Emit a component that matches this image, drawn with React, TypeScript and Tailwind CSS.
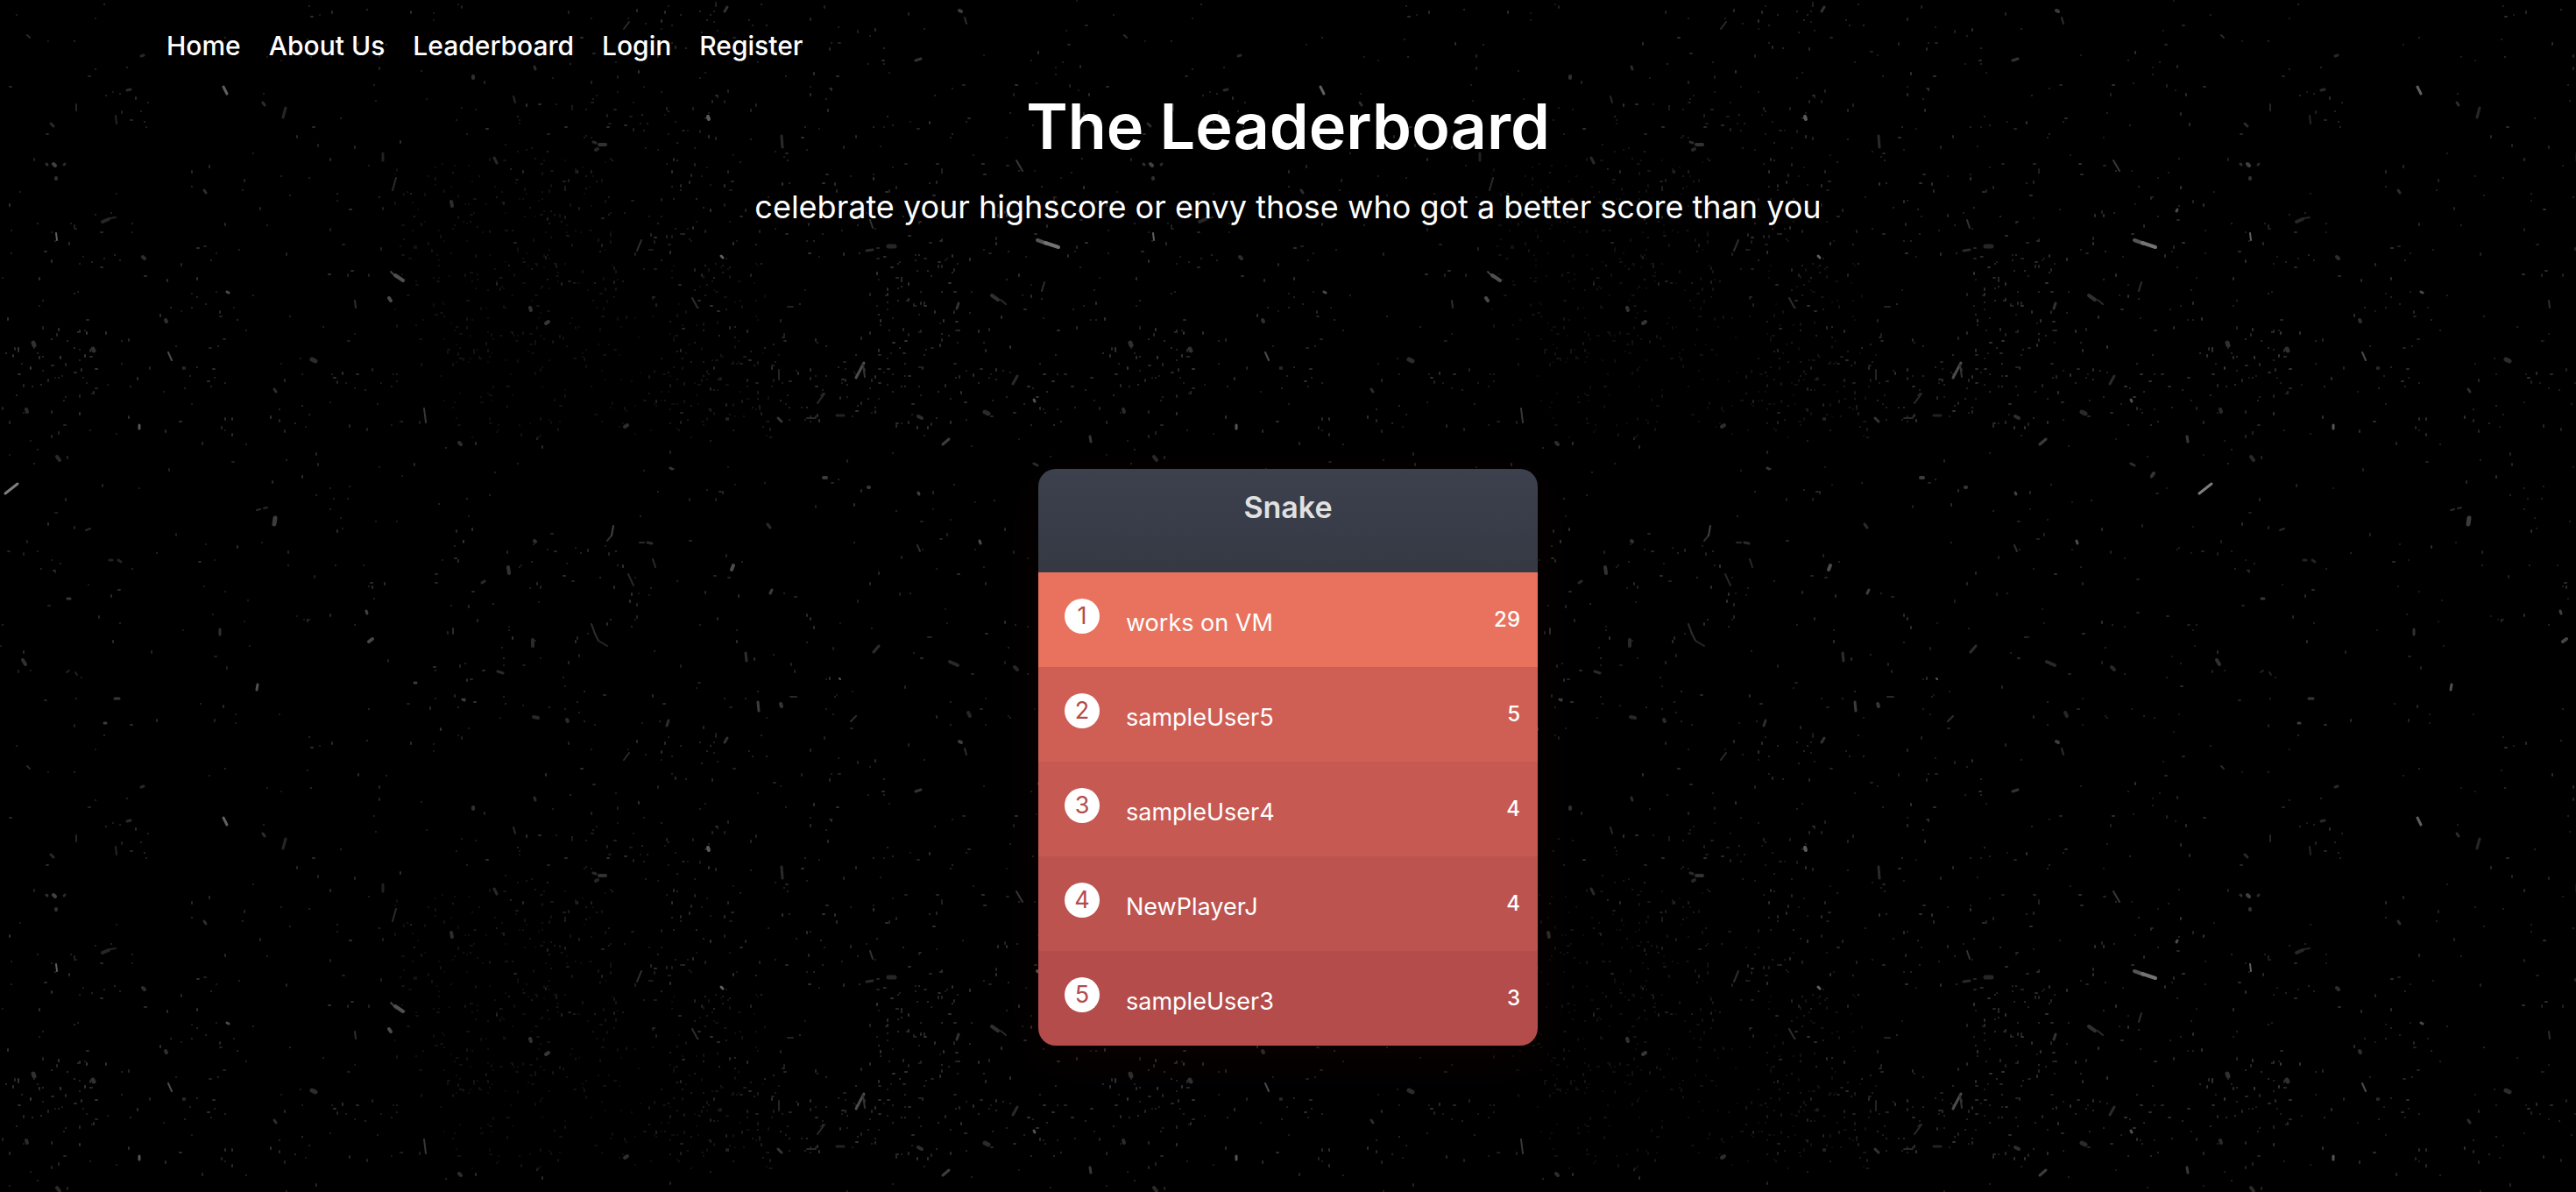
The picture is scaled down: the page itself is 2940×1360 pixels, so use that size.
const links = ["Home", "About Us", "Leaderboard", "Login", "Register"];

const players = [
  { name: "works on VM", score: 29, row: "bg-[#e8725d]" },
  { name: "sampleUser5", score: 5, row: "bg-[#cf5f55]" },
  { name: "sampleUser4", score: 4, row: "bg-[#c65952]" },
  { name: "NewPlayerJ", score: 4, row: "bg-[#bc534f]" },
  { name: "sampleUser3", score: 3, row: "bg-[#b34c4b]" },
];

const TILE_W = 1252;
const TILE_H = 834;

// Scratches and larger dust grains: x1, y1, x2, y2, width, grey level.
const scratches: number[][] = [
  [1184, 274, 1195, 278, 4, 85],
  [1193, 277, 1208, 282, 4, 115],
  [6, 563, 20, 552, 3, 125],
  [446, 310, 451, 315, 2, 65],
  [451, 314, 460, 320, 4, 80],
  [444, 340, 446, 343, 4, 75],
  [255, 99, 259, 107, 3, 95],
  [64, 266, 65, 274, 2, 95],
  [192, 402, 196, 411, 2, 75],
  [259, 333, 261, 334, 3, 75],
  [314, 591, 313, 598, 5, 60],
  [421, 732, 425, 729, 4, 70],
  [294, 781, 293, 787, 3, 80],
  [580, 647, 581, 654, 4, 50],
  [159, 485, 159, 489, 3, 85],
  [808, 133, 809, 136, 4, 90],
  [823, 292, 825, 294, 3, 95],
  [977, 431, 986, 414, 3, 75],
  [985, 416, 987, 430, 2, 50],
  [693, 617, 698, 611, 2, 45],
  [698, 611, 700, 600, 2, 65],
  [675, 712, 679, 723, 2, 45],
  [679, 723, 683, 731, 2, 45],
  [683, 731, 693, 737, 2, 38],
  [835, 650, 837, 645, 4, 75],
  [1076, 507, 1083, 501, 3, 60],
  [727, 286, 732, 274, 2, 45],
  [790, 340, 796, 351, 2, 45],
  [1132, 337, 1139, 342, 4, 48],
  [1142, 342, 1148, 347, 2, 42],
  [1160, 183, 1167, 195, 2, 55],
  [1189, 332, 1192, 322, 2, 45],
  [1092, 352, 1094, 346, 3, 50],
  [1232, 241, 1233, 239, 3, 75],
  [1095, 12, 1097, 13, 4, 60],
  [1101, 20, 1103, 27, 2, 45],
  [1045, 69, 1051, 67, 3, 50],
  [827, 13, 830, 8, 3, 50],
  [712, 33, 718, 25, 2, 42],
  [892, 155, 893, 168, 3, 42],
  [677, 162, 680, 163, 3, 42],
  [684, 165, 691, 165, 4, 50],
  [680, 171, 682, 170, 4, 38],
  [993, 251, 996, 260, 2, 50],
  [989, 286, 996, 285, 3, 40],
  [1014, 281, 1021, 281, 5, 38],
  [899, 350, 905, 350, 2, 35],
  [484, 466, 486, 482, 2, 55],
  [452, 203, 448, 217, 2, 42],
  [437, 175, 437, 183, 3, 34],
  [87, 119, 87, 126, 2, 38],
  [132, 132, 133, 141, 2, 38],
  [326, 123, 323, 134, 3, 38],
  [300, 117, 302, 120, 3, 45],
  [145, 103, 149, 102, 3, 42],
  [117, 253, 124, 250, 4, 38],
  [126, 249, 132, 248, 2, 36],
  [53, 187, 54, 188, 3, 48],
  [73, 188, 74, 187, 3, 42],
  [61, 187, 63, 189, 4, 65],
  [64, 203, 64, 204, 4, 48],
  [58, 141, 61, 144, 3, 42],
  [31, 40, 34, 43, 2, 42],
  [161, 64, 164, 63, 3, 40],
  [163, 293, 165, 295, 4, 45],
  [38, 391, 39, 394, 5, 48],
  [106, 398, 107, 400, 5, 48],
  [356, 410, 360, 412, 5, 44],
  [233, 217, 235, 220, 3, 45],
  [405, 343, 406, 351, 2, 45],
  [189, 365, 190, 367, 4, 46],
  [515, 230, 516, 235, 4, 44],
  [605, 351, 606, 354, 4, 50],
  [623, 369, 626, 367, 4, 55],
  [586, 110, 588, 117, 2, 40],
  [564, 180, 567, 186, 3, 40],
  [540, 87, 540, 89, 4, 48],
  [610, 76, 611, 79, 3, 42],
  [65, 521, 68, 525, 4, 42],
  [30, 467, 31, 470, 4, 42],
  [313, 444, 315, 447, 3, 45],
  [524, 505, 526, 507, 4, 45],
  [293, 582, 297, 581, 2, 42],
  [301, 580, 305, 579, 2, 42],
  [98, 605, 103, 603, 2, 42],
  [125, 639, 128, 639, 3, 35],
  [135, 639, 138, 641, 3, 35],
  [77, 683, 80, 683, 3, 55],
  [26, 753, 29, 758, 4, 48],
  [76, 767, 79, 765, 2, 35],
  [86, 767, 88, 770, 2, 35],
  [251, 718, 251, 724, 3, 48],
  [131, 797, 136, 797, 3, 55],
  [119, 825, 121, 825, 3, 60],
  [473, 779, 475, 779, 3, 60],
  [528, 798, 530, 799, 3, 65],
  [418, 697, 419, 700, 3, 65],
  [608, 730, 608, 737, 4, 42],
  [517, 717, 517, 723, 2, 45],
  [550, 665, 553, 663, 3, 42],
  [568, 766, 574, 768, 3, 42],
  [609, 818, 614, 819, 4, 40],
  [610, 617, 611, 618, 4, 48],
  [730, 619, 735, 619, 2, 42],
  [739, 619, 744, 620, 3, 42],
  [745, 638, 748, 647, 2, 40],
  [717, 655, 723, 668, 2, 38],
  [879, 677, 881, 673, 3, 60],
  [940, 545, 943, 545, 4, 60],
  [991, 556, 992, 556, 4, 55],
  [1048, 562, 1049, 564, 3, 65],
  [1118, 617, 1119, 620, 3, 75],
  [1047, 622, 1050, 629, 2, 45],
  [1204, 543, 1206, 540, 4, 52],
  [1244, 498, 1245, 504, 3, 55],
  [1180, 529, 1184, 531, 3, 45],
  [888, 477, 892, 481, 3, 52],
  [921, 477, 931, 477, 2, 40],
  [955, 474, 963, 474, 3, 34],
  [933, 460, 941, 449, 2, 42],
  [889, 422, 889, 433, 2, 36],
  [1180, 456, 1181, 458, 3, 80],
  [1048, 475, 1052, 477, 4, 46],
  [1124, 470, 1128, 472, 5, 42],
  [1156, 438, 1161, 429, 3, 42],
  [1084, 755, 1093, 759, 4, 40],
  [997, 744, 1003, 737, 3, 45],
  [851, 745, 852, 754, 3, 45],
  [865, 801, 866, 811, 3, 60],
  [891, 803, 892, 806, 4, 52],
  [761, 828, 763, 822, 3, 45],
  [971, 823, 977, 817, 2, 46],
  [958, 774, 959, 775, 2, 90],
  [1105, 813, 1107, 817, 4, 38],
  [902, 795, 909, 795, 2, 40],
  [647, 821, 648, 823, 4, 42],
  [1158, 761, 1161, 764, 4, 40],
  [713, 487, 716, 485, 4, 46],
  [765, 534, 767, 535, 3, 55],
  [876, 598, 879, 602, 3, 42],
];

// Areas strewn with small specks: x, y, width, height, count, grey level.
const fields: number[][] = [
  [0, 0, 626, 210, 75, 40],
  [0, 210, 480, 207, 95, 40],
  [450, 180, 250, 237, 200, 19],
  [500, 300, 380, 200, 220, 18],
  [560, 100, 280, 230, 110, 32],
  [626, 0, 313, 200, 90, 40],
  [939, 0, 313, 200, 75, 40],
  [740, 200, 512, 217, 210, 42],
  [1000, 270, 90, 140, 50, 46],
  [0, 370, 110, 90, 45, 46],
  [0, 417, 480, 80, 75, 40],
  [880, 417, 372, 70, 120, 42],
  [740, 400, 150, 90, 60, 30],
  [0, 500, 626, 334, 130, 38],
  [490, 600, 240, 234, 75, 42],
  [720, 490, 532, 344, 150, 38],
];

function seeded(seed: number) {
  let s = seed;
  return () => {
    s = (s * 16807) % 2147483647;
    return (s - 1) / 2147483646;
  };
}

const random = seeded(48271);

const specks = fields.flatMap(([x, y, w, h, count, grey]) =>
  Array.from({ length: count }, () => {
    const shape = random();
    return {
      x: Math.round((x + random() * w) / 2) * 2,
      y: Math.round((y + random() * h) / 2) * 2,
      w: shape > 0.85 ? 4 : 2,
      h: shape < 0.28 ? 4 : 2,
      grey: Math.round(grey * (0.8 + random() * 0.4)),
    };
  }),
);

const tone = (grey: number) => `rgb(${grey} ${grey} ${grey})`;

function DustBackground() {
  return (
    <svg className="pointer-events-none absolute inset-0 size-full" aria-hidden="true">
      <defs>
        <pattern id="dust" width={TILE_W} height={TILE_H} patternUnits="userSpaceOnUse">
          {specks.map((s, i) => (
            <rect key={i} x={s.x} y={s.y} width={s.w} height={s.h} rx="1" fill={tone(s.grey)} />
          ))}
          {scratches.map(([x1, y1, x2, y2, width, grey], i) => (
            <line
              key={i}
              x1={x1}
              y1={y1}
              x2={x2}
              y2={y2}
              stroke={tone(grey)}
              strokeWidth={width}
              strokeLinecap="round"
            />
          ))}
        </pattern>
      </defs>
      <rect width="100%" height="100%" fill="url(#dust)" />
    </svg>
  );
}

export default function App() {
  return (
    <div className="relative isolate min-h-screen overflow-hidden bg-black font-[Inter,sans-serif] text-white">
      <DustBackground />
      <div className="relative">
        <nav className="px-[190px] pt-8" aria-label="Main">
          <ul className="flex flex-wrap gap-8 text-[30px] leading-10 font-medium">
            {links.map((label) => (
              <li key={label}>
                <a href="#">{label}</a>
              </li>
            ))}
          </ul>
        </nav>

        <header className="mt-6 text-center">
          <h1 className="text-[72px] leading-24 font-semibold">The Leaderboard</h1>
          <p className="mt-5 text-[36px] leading-12">
            celebrate your highscore or envy those who got a better score than you
          </p>
        </header>

        <main className="mt-[275px] pb-20">
          <section className="mx-auto w-full max-w-[570px] overflow-hidden rounded-[20px] shadow-[0_14px_60px_rgba(62,9,11,0.2)]">
            <h2 className="bg-linear-to-b from-[#3d414e] to-[#353944] pt-5 pb-[50px] text-center text-[34px] leading-12 font-semibold text-[#e1e1e1]">
              Snake
            </h2>
            <ol>
              {players.map((player, i) => (
                <li
                  key={player.name}
                  className={`flex items-start gap-[30px] py-[30px] pr-5 pl-[30px] ${player.row}`}
                >
                  <span className="flex size-10 shrink-0 items-center justify-center rounded-full bg-white text-[27px] text-[#b34c4b]">
                    {i + 1}
                  </span>
                  <span className="flex-1 pt-2 text-[27px] leading-10">{player.name}</span>
                  <span className="pt-1 text-[24px] leading-10 font-medium">{player.score}</span>
                </li>
              ))}
            </ol>
          </section>
        </main>
      </div>
    </div>
  );
}
